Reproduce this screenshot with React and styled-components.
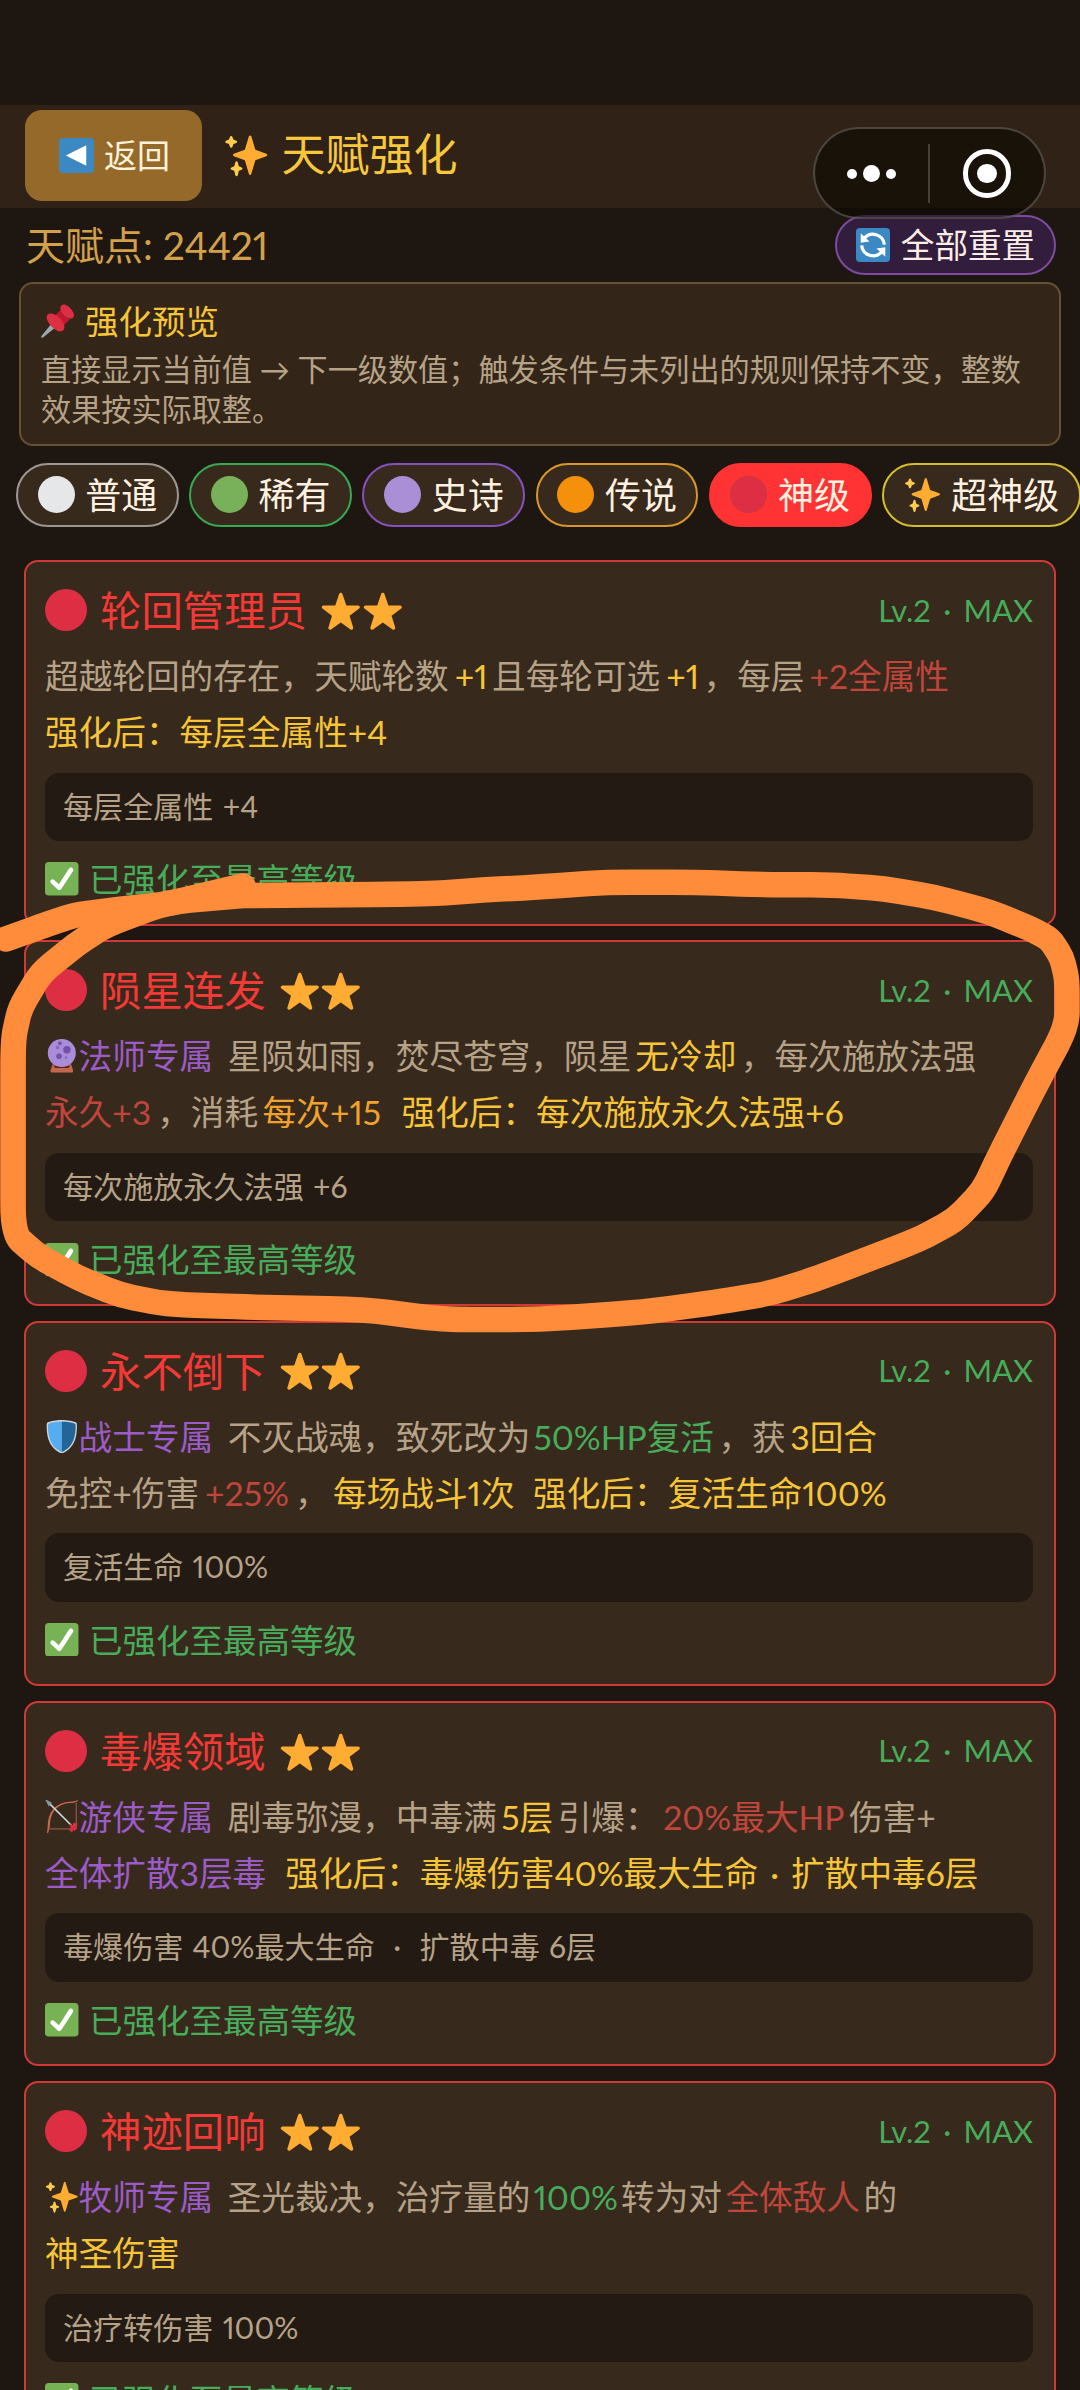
import React from "react";
import styled, { createGlobalStyle } from "styled-components";

const GlobalStyle = createGlobalStyle`
  * { box-sizing: border-box; }
  html, body { margin: 0; background: #1e1711; overflow: hidden; }
  body {
    font-family: Lato, "Noto Sans CJK SC", sans-serif;
    font-variant-numeric: proportional-nums;
    -webkit-font-smoothing: antialiased;
  }
`;

const C = {
  tan: "#b5a287",
  gold: "#f6c538",
  red: "#c0463c",
  orange: "#f0a22c",
  purple: "#9b5cc8",
  green: "#47ad5b",
};

const Screen = styled.div`
  position: relative;
  width: 1080px;
  height: 2390px;
  overflow: hidden;
  background: #1e1711;
  padding-top: 104.5px;
`;

const Header = styled.header`
  height: 103px;
  display: flex;
  align-items: center;
  padding: 0 25px 1px;
  background: #302217;
`;

const BackButton = styled.button`
  width: 177px;
  height: 91px;
  display: flex;
  align-items: center;
  justify-content: center;
  gap: 10px;
  padding: 0 0 0 2px;
  border: 0;
  border-radius: 17px;
  background: #95692a;
  color: #fff3dc;
  font: inherit;
  font-size: 33px;
`;

const PageTitle = styled.h1`
  display: flex;
  align-items: center;
  gap: 13px;
  margin: 0 0 0 22px;
  color: #f8c83c;
  font-size: 44px;
  font-weight: 400;
  line-height: 60px;
`;

const PointsRow = styled.div`
  height: 74.5px;
  display: flex;
  align-items: flex-start;
  justify-content: space-between;
  padding: 7.5px 24.5px 0 26px;
`;

const Points = styled.div`
  margin-top: -1px;
  color: #d3a04b;
  font-size: 39px;
  line-height: 62px;
`;

const Label = styled.span`
  margin-top: -3px;
`;

const ResetButton = styled.button`
  width: 221px;
  height: 60px;
  display: flex;
  align-items: center;
  justify-content: center;
  gap: 11px;
  padding: 0 0 0 1px;
  border: 2px solid #7e4c9f;
  border-radius: 30px;
  background: #321d3c;
  color: #fbeee6;
  font: inherit;
  font-size: 33.6px;
`;

const Preview = styled.section`
  height: 164px;
  margin: 0 19px;
  padding: 15px 20px;
  border: 2px solid #655033;
  border-radius: 14px;
  background: #342519;
`;

const PreviewTitle = styled.div`
  display: flex;
  align-items: center;
  gap: 10px;
  height: 44px;
  color: ${C.gold};
  font-size: 33.5px;
`;

const PreviewText = styled.p`
  margin: 6px 0 0;
  color: ${C.tan};
  font-size: 30.15px;
  line-height: 40px;
  white-space: nowrap;
`;

const Tabs = styled.nav`
  display: flex;
  gap: 10.4px;
  margin-top: 16.5px;
  padding-left: 16px;
`;

const Tab = styled.button`
  flex: none;
  height: 64.5px;
  display: flex;
  align-items: center;
  gap: 10.8px;
  padding: 0 19.5px;
  border: 2px solid ${(p) => p.$tone};
  border-radius: 33px;
  background: ${(p) => (p.$active ? "#ff3333" : "#38291d")};
  color: #fff1e0;
  font: inherit;
  font-size: 36px;
  white-space: nowrap;
`;

const CardList = styled.main`
  display: flex;
  flex-direction: column;
  gap: 14.7px;
  margin: 33px 24px 0;
`;

const Card = styled.article`
  flex: none;
  height: 365.6px;
  padding: 22px 21px 0 19px;
  border: 2px solid #cf3a38;
  border-radius: 14px;
  background: #38291d;
`;

const CardHead = styled.div`
  display: flex;
  align-items: center;
  height: 52px;
`;

const CardTitle = styled.h2`
  margin: 0 13px 0 13px;
  color: #f43936;
  font-size: 41.4px;
  font-weight: 400;
  line-height: 50px;
`;

const Stars = styled.span`
  display: flex;
  margin-top: 3px;
`;

const Level = styled.span`
  margin-left: auto;
  color: ${C.green};
  font-size: 30.8px;
  white-space: pre;
  word-spacing: 4.5px;
`;

const Desc = styled.div`
  margin-top: 12px;
`;

const Line = styled.div`
  height: 56px;
  display: flex;
  align-items: center;
  color: ${C.tan};
  font-size: 33.65px;
  line-height: 56px;
  white-space: pre;
  word-spacing: 3.5px;
`;

const Mark = styled.span`
  color: ${(p) => p.$tone};
  margin: 0 ${(p) => p.$after ?? 4.5}px 0 ${(p) => (p.$first ? 0 : p.$before ?? 4.5)}px;
`;

const Stat = styled.div`
  height: 68.5px;
  margin-top: 12.5px;
  padding-left: 18px;
  border-radius: 14px;
  background: #241a14;
  color: ${C.tan};
  font-size: 30.1px;
  line-height: 67px;
  white-space: pre;
  word-spacing: 1.5px;
`;

const Done = styled.div`
  height: 40px;
  display: flex;
  align-items: center;
  gap: 10.5px;
  margin-top: 18px;
  color: ${C.green};
  font-size: 33.5px;
`;

const Capsule = styled.div`
  position: absolute;
  left: 813px;
  top: 127px;
  width: 232.5px;
  height: 92px;
  display: flex;
  align-items: center;
  border: 2px solid rgba(255, 255, 255, 0.22);
  border-radius: 46px;
  background: rgba(12, 8, 2, 0.62);
`;

const CapsuleHalf = styled.div`
  flex: 1;
  display: flex;
  align-items: center;
  justify-content: center;
  gap: 5.5px;
  padding-top: 1px;
`;

const CapsuleRule = styled.div`
  width: 2px;
  height: 59px;
  background: #4a4038;
`;

const Dot = styled.i`
  width: ${(p) => p.$d}px;
  height: ${(p) => p.$d}px;
  border-radius: 50%;
  background: #fff;
`;

const Ring = styled.div`
  width: 48.5px;
  height: 48.5px;
  display: flex;
  align-items: center;
  justify-content: center;
  border: 5px solid #fff;
  border-radius: 50%;
`;

const Scribble = styled.svg`
  position: absolute;
  inset: 0;
  pointer-events: none;
`;

const Glyph = styled.svg`
  flex: none;
  display: block;
`;

const Icon = ({ size, children }) => (
  <Glyph width={size} height={size} viewBox="0 0 36 36">
    {children}
  </Glyph>
);

const Disc = ({ size, color, edge }) => (
  <Icon size={size}>
    <circle cx="18" cy="18" r={edge ? 17.5 : 18} fill={color} stroke={edge} />
  </Icon>
);

const Sparkles = ({ size }) => (
  <Icon size={size}>
    <path fill="#FFAC33" d="M34.347 16.893l-8.899-3.294-3.323-10.891c-.128-.42-.517-.708-.956-.708-.439 0-.828.288-.956.708l-3.322 10.891-8.9 3.294c-.393.146-.653.519-.653.938 0 .418.26.793.653.938l8.895 3.293 3.324 11.223c.126.424.516.715.959.715.442 0 .833-.291.959-.716l3.324-11.223 8.896-3.293c.391-.144.652-.518.652-.937 0-.418-.261-.792-.653-.938z" />
    <path fill="#FFCC4D" d="M14.347 27.894l-2.314-.856-.9-3.3c-.118-.436-.513-.738-.964-.738-.451 0-.846.302-.965.737l-.9 3.3-2.313.856c-.393.145-.653.52-.653.938 0 .418.26.793.653.938l2.301.853.907 3.622c.112.444.511.756.97.756.459 0 .858-.312.97-.757l.907-3.622 2.301-.853c.393-.144.653-.519.653-.937 0-.418-.26-.793-.653-.937zM10.009 6.231l-2.364-.875-.876-2.365c-.145-.393-.519-.653-.938-.653-.418 0-.792.26-.938.653l-.875 2.365-2.365.875c-.393.146-.653.52-.653.938 0 .418.26.793.653.938l2.365.875.875 2.365c.146.393.52.653.938.653.418 0 .792-.26.938-.653l.875-2.365 2.365-.875c.393-.146.653-.52.653-.938 0-.418-.26-.792-.653-.938z" />
  </Icon>
);

const Star = ({ size }) => (
  <Icon size={size}>
    <path
      fill="#FFAC33"
      stroke="#FFAC33"
      strokeWidth="3"
      strokeLinejoin="round"
      d="M18 3 21.7 13.9 33 14 23.9 20.900 27.300 32 18 25.400 8.700 32 12.100 20.900 3 14 14.300 13.900Z"
    />
  </Icon>
);

const Check = ({ size }) => (
  <Icon size={size}>
    <rect width="36" height="36" rx="4" fill="#77B255" />
    <path fill="#fff" d="M29.28 6.362c-1.156-.751-2.704-.422-3.458.736L14.936 23.877l-5.029-4.65c-1.014-.938-2.596-.875-3.533.138-.937 1.014-.875 2.596.139 3.533l7.209 6.666c.48.445 1.09.665 1.696.665.673 0 1.534-.282 2.099-1.139.332-.506 12.5-19.27 12.5-19.27.751-1.159.421-2.707-.737-3.458z" />
  </Icon>
);

const BackArrow = ({ size }) => (
  <Icon size={size}>
    <rect width="36" height="36" rx="4" fill="#3B88C3" />
    <path fill="#fff" d="M28 7.5v21L7 18z" />
  </Icon>
);

const Reload = ({ size }) => (
  <Icon size={size}>
    <rect width="36" height="36" rx="4" fill="#3B88C3" />
    <g fill="none" stroke="#fff" strokeWidth="3.4">
      <path d="M8.6 11.2A12 12 0 0 1 30 17.5" />
      <path d="M6 18.5A12 12 0 0 0 27.4 24.8" />
    </g>
    <path fill="#fff" d="M5 5.5v10.2l9.3-1.5zM31 30.5V20.3l-9.3 1.5z" />
  </Icon>
);

const Pin = ({ size }) => (
  <Icon size={size}>
    <path fill="#99AAB5" d="M11.5 20.5 15.5 24.5 2 35.6C1 36.4-.2 35 .5 34z" />
    <path fill="#DD2E44" d="M21.5 1.600C23.500-.5 27 0 31 4.400S36 12.600 34 14.500 27 15.500 23.800 12 19.500 3.800 21.500 1.600z" />
    <path fill="#BE1931" d="M21 6 15 12c2.500 5.500 5.500 8.500 9.800 10.200L31 15.500c-4.500-.3-9-4.500-10-9.500z" />
    <path fill="#DD2E44" d="M6.900 11.300c2.600-2.600 8.300-1.300 13 3.400s6.300 10.600 3.700 13.200-7.400.800-11.800-3.600-7.500-10.400-4.900-13z" />
  </Icon>
);

const CrystalBall = ({ size }) => (
  <Icon size={size}>
    <path fill="#C1694F" d="M8 27h20l2 6.500c.4 1.400-.3 2.500-1.500 2.500h-21C6.300 36 5.600 34.900 6 33.500z" />
    <path fill="#662113" d="M9 28.500h18l-2 2.500H11z" />
    <circle cx="18" cy="15" r="15" fill="#AA8DD8" />
    <circle cx="23.500" cy="11.500" r="4" fill="#7450A8" />
    <circle cx="15" cy="18.500" r="3" fill="#7450A8" />
    <circle cx="13.500" cy="9" r="2" fill="#9266CC" />
    <circle cx="16" cy="4.500" r="2" fill="#7450A8" />
    <circle cx="22.500" cy="20" r="1.500" fill="#9266CC" />
  </Icon>
);

const Shield = ({ size }) => (
  <Icon size={size}>
    <path fill="#CCD6DD" d="M18 0C12 0 6 1.200 3 2.500 2 3 1.800 4 1.800 6c0 8 .5 24 16.200 30C33.700 30 34.200 14 34.200 6c0-2-.2-3-1.200-3.500C30 1.200 24 0 18 0z" />
    <path fill="#55ACEE" d="M18 1.600C12.500 1.600 7 2.600 4 4c-.7.400-.8 1-.8 2.500C3.200 14 4 28.500 18 34.400z" />
    <path fill="#269" d="M18 1.600c5.500 0 11 1 14 2.400.7.400.8 1 .8 2.500C32.800 14 32 28.500 18 34.400z" />
  </Icon>
);

const Bow = ({ size }) => (
  <Icon size={size}>
    <path d="M33.500 3v27.500M5 31h27" fill="none" stroke="#BE6B55" strokeWidth=".9" />
    <path fill="#C1694F" d="M36 .8c-3 2-5.500 2.300-9 2.500C14 4 6.700 12 5.500 24c-.3 4-.5 7.500-2.300 11.500L2 35c1-4 .7-7 1.200-11.500C4.500 10.500 13.500 2.300 26.500 1.800c3.500-.1 6-.3 8.500-1.400z" />
    <path fill="none" stroke="#CCD6DD" strokeWidth="1.700" d="M3 2 30 29" />
    <path fill="#8899A6" d="M0-1 7.500 3 4 7z" />
    <path fill="#DD2E44" d="M26 25.500 30 27v-2l4.500-.5v3.500l-3 1 3.500 1-3.500 3.500-1-2-1.500 3.500-4-4 3 .2z" />
  </Icon>
);

const CLASS_ICONS = { mage: CrystalBall, warrior: Shield, ranger: Bow, priest: Sparkles };

const m = (text, tone, opts = {}) => ({ text, tone, ...opts });

const TABS = [
  { label: "普通", tone: "#9c9790", dot: "#e6e7e8" },
  { label: "稀有", tone: "#38a853", dot: "#78b159" },
  { label: "史诗", tone: "#8650bd", dot: "#aa8ed6" },
  { label: "传说", tone: "#d8962b", dot: "#f4900c" },
  { label: "神级", tone: "#ff3333", dot: "#dd2e44", active: true },
  { label: "超神级", tone: "#d4bd2e" },
];

const CARDS = [
  {
    name: "轮回管理员",
    lines: [
      ["超越轮回的存在，天赋轮数", m("+1", C.gold, { before: 6 }), "且每轮可选", m("+1", C.gold, { before: 6 }), "，每层", m("+2全属性", C.red, { before: 5 })],
      [m("强化后：每层全属性+4", C.gold)],
    ],
    stat: "每层全属性 +4",
  },
  {
    name: "陨星连发",
    icon: "mage",
    lines: [
      [m("法师专属", C.purple, { after: 14.5 }), "星陨如雨，焚尽苍穹，陨星", m("无冷却", C.gold, { before: 4 }), "，每次施放法强"],
      [m("永久+3", C.red, { after: 6 }), "，消耗", m("每次+15", C.orange, { after: 16 }), m("强化后：每次施放永久法强+6", C.gold)],
    ],
    stat: "每次施放永久法强 +6",
  },
  {
    name: "永不倒下",
    icon: "warrior",
    lines: [
      [m("战士专属", C.purple, { after: 14.5 }), "不灭战魂，致死改为", m("50%HP复活", C.green, { before: 3 }), "，获", m("3回合", C.gold)],
      ["免控+伤害", m("+25%", C.red, { before: 6, after: 6 }), "，", m("每场战斗1次", C.gold, { after: 14 }), m("强化后：复活生命100%", C.gold)],
    ],
    stat: "复活生命 100%",
  },
  {
    name: "毒爆领域",
    icon: "ranger",
    lines: [
      [m("游侠专属", C.purple, { after: 14.5 }), "剧毒弥漫，中毒满", m("5层", C.gold), "引爆：", m("20%最大HP", C.red), "伤害+"],
      [m("全体扩散3层毒", C.purple, { after: 14.5 }), m("强化后：毒爆伤害40%最大生命 · 扩散中毒6层", C.gold)],
    ],
    stat: "毒爆伤害 40%最大生命  ·  扩散中毒 6层",
  },
  {
    name: "神迹回响",
    icon: "priest",
    lines: [
      [m("牧师专属", C.purple, { after: 14.5 }), "圣光裁决，治疗量的", m("100%", C.green, { before: 3, after: 3 }), "转为对", m("全体敌人", C.red, { before: 3.5, after: 3.5 }), "的"],
      [m("神圣伤害", C.gold)],
    ],
    stat: "治疗转伤害 100%",
  },
];

const TAIL = [[6, 939], [45, 925], [73, 915.5], [116, 909.5], [167, 904], [207, 894.5], [243, 886]];

const LOOP = [
  [243, 895.5], [168, 902], [106, 925], [76, 944.5], [41, 973], [20, 1008], [13, 1040],
  [13, 1136], [13, 1234], [38, 1256], [78, 1278], [120, 1295], [165, 1304], [241, 1307],
  [365, 1309.5], [441, 1319.5], [540, 1319.5], [645, 1312], [714, 1302.5], [770, 1293.5],
  [820, 1277.5], [918, 1240], [955, 1220], [983, 1191], [1000, 1155], [1033.5, 1089],
  [1067, 1026], [1067, 980], [1062, 958], [1050, 939], [1029, 928], [988, 911.5],
  [936, 897.5], [884, 888.7], [833, 885], [760, 884.5], [698, 882.5], [609, 882],
  [540, 887], [482, 890], [430, 894], [243, 895.5],
];

/* Rounds the corners of a freehand polyline by curving between segment midpoints. */
function penPath(points) {
  let d = `M${points[0][0]} ${points[0][1]}`;
  for (let i = 1; i < points.length - 1; i += 1) {
    const [x, y] = points[i];
    const [nx, ny] = points[i + 1];
    const prev = points[i - 1];
    const t = 0.3;
    d += `L${x + (prev[0] - x) * t} ${y + (prev[1] - y) * t}`;
    d += `Q${x} ${y} ${x + (nx - x) * t} ${y + (ny - y) * t}`;
  }
  const last = points[points.length - 1];
  return `${d}L${last[0]} ${last[1]}`;
}

function DescLine({ parts, icon }) {
  const ClassIcon = icon && CLASS_ICONS[icon];
  return (
    <Line>
      {ClassIcon && <ClassIcon size={33.6} />}
      {parts.map((p, i) =>
        typeof p === "string" ? (
          <span key={i}>{p}</span>
        ) : (
          <Mark key={i} $tone={p.tone} $first={i === 0} $before={p.before} $after={p.after}>
            {p.text}
          </Mark>
        )
      )}
    </Line>
  );
}

function TalentCard({ name, icon, lines, stat }) {
  return (
    <Card>
      <CardHead>
        <Disc size={42} color="#dd2e44" />
        <CardTitle>{name}</CardTitle>
        <Stars>
          <Star size={41.6} />
          <Star size={41.6} />
        </Stars>
        <Level>Lv.2 · MAX</Level>
      </CardHead>
      <Desc>
        <DescLine parts={lines[0]} icon={icon} />
        <DescLine parts={lines[1]} />
      </Desc>
      <Stat>{stat}</Stat>
      <Done>
        <Check size={33.5} />
        <Label>已强化至最高等级</Label>
      </Done>
    </Card>
  );
}

export default function App() {
  return (
    <Screen lang="zh-CN">
      <GlobalStyle />
      <Header>
        <BackButton>
          <BackArrow size={35} />
          <Label>返回</Label>
        </BackButton>
        <PageTitle>
          <Sparkles size={44.4} />
          <Label>天赋强化</Label>
        </PageTitle>
      </Header>
      <PointsRow>
        <Points>天赋点: 24421</Points>
        <ResetButton>
          <Reload size={34} />
          <Label>全部重置</Label>
        </ResetButton>
      </PointsRow>
      <Preview>
        <PreviewTitle>
          <Pin size={34} />
          <Label>强化预览</Label>
        </PreviewTitle>
        <PreviewText>
          直接显示当前值 → 下一级数值；触发条件与未列出的规则保持不变，整数
          <br />
          效果按实际取整。
        </PreviewText>
      </Preview>
      <Tabs>
        {TABS.map((t) => (
          <Tab key={t.label} $tone={t.tone} $active={t.active}>
            {t.dot ? <Disc size={37} color={t.dot} edge={t.active && "#c93a44"} /> : <Sparkles size={37} />}
            <Label>{t.label}</Label>
          </Tab>
        ))}
      </Tabs>
      <CardList>
        {CARDS.map((c) => (
          <TalentCard key={c.name} {...c} />
        ))}
      </CardList>
      <Capsule>
        <CapsuleHalf>
          <Dot $d={10} />
          <Dot $d={17.5} />
          <Dot $d={10} />
        </CapsuleHalf>
        <CapsuleRule />
        <CapsuleHalf>
          <Ring>
            <Dot $d={19.5} />
          </Ring>
        </CapsuleHalf>
      </Capsule>
      <Scribble width="1080" height="2390" viewBox="0 0 1080 2390">
        <g fill="none" stroke="#ff8c3a" strokeWidth="25.5" strokeLinecap="round" strokeLinejoin="round">
          <path d={penPath(TAIL)} />
          <path d={penPath(LOOP)} />
        </g>
      </Scribble>
    </Screen>
  );
}
